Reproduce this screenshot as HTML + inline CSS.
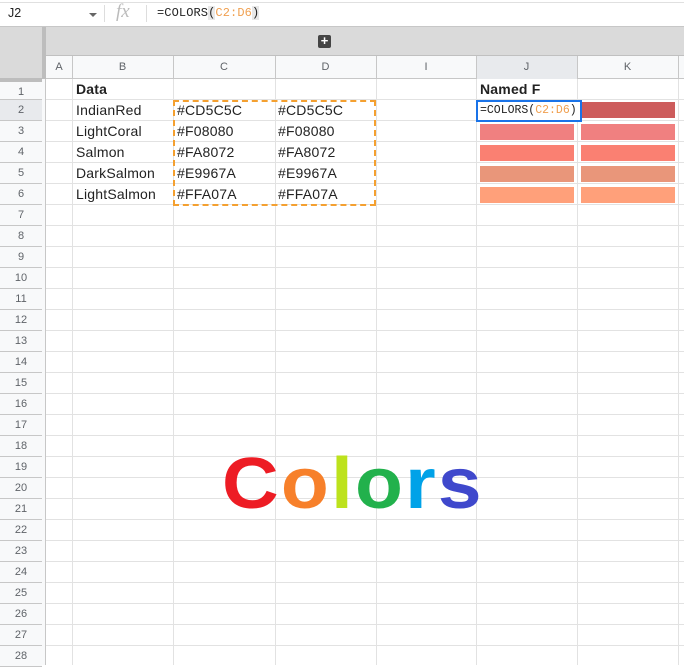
<!DOCTYPE html>
<html><head><meta charset="utf-8"><style>
*{margin:0;padding:0;box-sizing:border-box}
body{width:684px;height:665px;overflow:hidden;background:#fff;font-family:"Liberation Sans",Arial,sans-serif;position:relative}
.a{position:absolute}
.mono{font-family:"Liberation Mono",monospace}
.grid{left:46px;top:79px;width:638px;height:586px;background:repeating-linear-gradient(to bottom,#fff 0,#fff 20px,#e2e2e2 20px,#e2e2e2 21px)}
.v{width:1px;top:79px;height:586px;background:#e2e2e2}
.hv{width:1px;top:56px;height:23px;background:#c7c7c7}
.ch{top:56px;height:23px;font-size:11px;color:#5f6368;text-align:center;line-height:23px}
.rh{left:0;width:42px;height:21px;font-size:11px;color:#5f6368;text-align:center;line-height:20px;border-bottom:1px solid #c7c7c7;background:#f8f9fa}
.t{font-size:14px;color:#222;line-height:21px;height:21px;letter-spacing:0.2px}
.sw{height:16px;width:94px}
</style></head><body>
<div class="a" style="left:0;top:0;width:684px;height:3px;border-bottom:1px solid #e0e0e0"></div>
<div class="a" style="left:8px;top:6px;font-size:12.5px;color:#222">J2</div>
<div class="a" style="left:89px;top:13px;width:0;height:0;border-left:4px solid transparent;border-right:4px solid transparent;border-top:4px solid #666"></div>
<div class="a" style="left:104px;top:5px;width:1px;height:17px;background:#ddd"></div>
<div class="a" style="left:116px;top:1px;font-family:'Liberation Serif',serif;font-style:italic;font-size:19px;color:#bbb">fx</div>
<div class="a" style="left:146px;top:5px;width:1px;height:17px;background:#ddd"></div>
<div class="a mono" style="left:157px;top:6px;font-size:12px;color:#222;letter-spacing:0.1px">=COLORS<span style="background:#e8e8e8">(</span><span style="color:#f0a050">C2:D6</span><span style="background:#e8e8e8">)</span></div>
<div class="a" style="left:0;top:26px;width:684px;height:1px;background:#c7c7c7"></div>
<div class="a" style="left:0;top:27px;width:684px;height:28px;background:#dadada"></div>
<div class="a" style="left:318px;top:35px;width:13px;height:13px;background:#444;border-radius:2px;color:#fff;font-size:13px;line-height:12px;text-align:center;font-weight:bold">+</div>
<div class="a" style="left:0;top:55px;width:684px;height:1px;background:#c0c0c0"></div>
<div class="a" style="left:0;top:56px;width:684px;height:23px;background:#f8f9fa;border-bottom:1px solid #c7c7c7"></div>
<div class="a" style="left:476px;top:56px;width:101px;height:23px;background:#e8eaed"></div>
<div class="a" style="left:0;top:27px;width:42px;height:52px;background:#dadada"></div>
<div class="a" style="left:42px;top:27px;width:4px;height:53px;background:#bdbdbd"></div>
<div class="a" style="left:0;top:78px;width:46px;height:4px;background:#bdbdbd"></div>
<div class="a hv" style="left:72px"></div><div class="a hv" style="left:173px"></div><div class="a hv" style="left:275px"></div><div class="a hv" style="left:376px"></div><div class="a hv" style="left:476px"></div><div class="a hv" style="left:577px"></div><div class="a hv" style="left:678px"></div>
<div class="a ch" style="left:46px;width:26px">A</div>
<div class="a ch" style="left:72px;width:101px">B</div>
<div class="a ch" style="left:173px;width:102px">C</div>
<div class="a ch" style="left:275px;width:101px">D</div>
<div class="a ch" style="left:376px;width:100px">I</div>
<div class="a ch" style="left:476px;width:101px">J</div>
<div class="a ch" style="left:577px;width:101px">K</div>
<div class="a grid"></div>
<div class="a v" style="left:72px"></div><div class="a v" style="left:173px"></div><div class="a v" style="left:275px"></div><div class="a v" style="left:376px"></div><div class="a v" style="left:476px"></div><div class="a v" style="left:577px"></div><div class="a v" style="left:678px"></div>
<div class="a" style="top:79px;height:586px;background:#c7c7c7;width:1px;left:45px"></div>
<div class="a" style="left:0;top:82px">
<div class="rh" style="height:18px">1</div><div class="rh" style="background:#e8eaed">2</div><div class="rh">3</div><div class="rh">4</div><div class="rh">5</div><div class="rh">6</div><div class="rh">7</div><div class="rh">8</div><div class="rh">9</div><div class="rh">10</div><div class="rh">11</div><div class="rh">12</div><div class="rh">13</div><div class="rh">14</div><div class="rh">15</div><div class="rh">16</div><div class="rh">17</div><div class="rh">18</div><div class="rh">19</div><div class="rh">20</div><div class="rh">21</div><div class="rh">22</div><div class="rh">23</div><div class="rh">24</div><div class="rh">25</div><div class="rh">26</div><div class="rh">27</div><div class="rh">28</div>
</div>
<div class="a" style="left:42px;top:79px;width:3px;height:586px;background:#f8f9fa"></div>
<div class="a t" style="left:76px;top:79px;font-weight:bold">Data</div>
<div class="a t" style="left:480px;top:79px;font-weight:bold">Named F</div>
<div class="a" style="left:76px;top:100px">
<div class="t">IndianRed</div><div class="t">LightCoral</div><div class="t">Salmon</div><div class="t">DarkSalmon</div><div class="t">LightSalmon</div></div>
<div class="a" style="left:177px;top:100px">
<div class="t">#CD5C5C</div><div class="t">#F08080</div><div class="t">#FA8072</div><div class="t">#E9967A</div><div class="t">#FFA07A</div></div>
<div class="a" style="left:278px;top:100px">
<div class="t">#CD5C5C</div><div class="t">#F08080</div><div class="t">#FA8072</div><div class="t">#E9967A</div><div class="t">#FFA07A</div></div>
<div class="a" style="left:173px;top:100px;width:203px;height:106px;border:2px dashed #f4a030"></div>
<div class="a sw" style="left:581px;top:102px;background:#CD5C5C"></div>
<div class="a sw" style="left:480px;top:124px;background:#F08080"></div><div class="a sw" style="left:581px;top:124px;background:#F08080"></div>
<div class="a sw" style="left:480px;top:145px;background:#FA8072"></div><div class="a sw" style="left:581px;top:145px;background:#FA8072"></div>
<div class="a sw" style="left:480px;top:166px;background:#E9967A"></div><div class="a sw" style="left:581px;top:166px;background:#E9967A"></div>
<div class="a sw" style="left:480px;top:187px;background:#FFA07A"></div><div class="a sw" style="left:581px;top:187px;background:#FFA07A"></div>
<div class="a mono" style="left:476px;top:100px;width:106px;height:22px;border:2px solid #1a73e8;background:#fff;font-size:11.5px;line-height:18px;padding-left:2px;color:#222;letter-spacing:0px;white-space:nowrap;overflow:hidden">=COLORS(<span style="color:#f0a050">C2:D6</span>)</div>
<div class="a" style="left:222px;top:434px;font-size:72px;font-weight:bold;letter-spacing:2px;line-height:100px;white-space:nowrap;transform:scaleX(1.09);transform-origin:0 0">
<span style="color:#ed1c24">C</span><span style="color:#f7802a">o</span><span style="color:#bde21c">l</span><span style="color:#22b14c">o</span><span style="color:#00a2e8">r</span><span style="color:#3f48cc">s</span></div>
</body></html>
